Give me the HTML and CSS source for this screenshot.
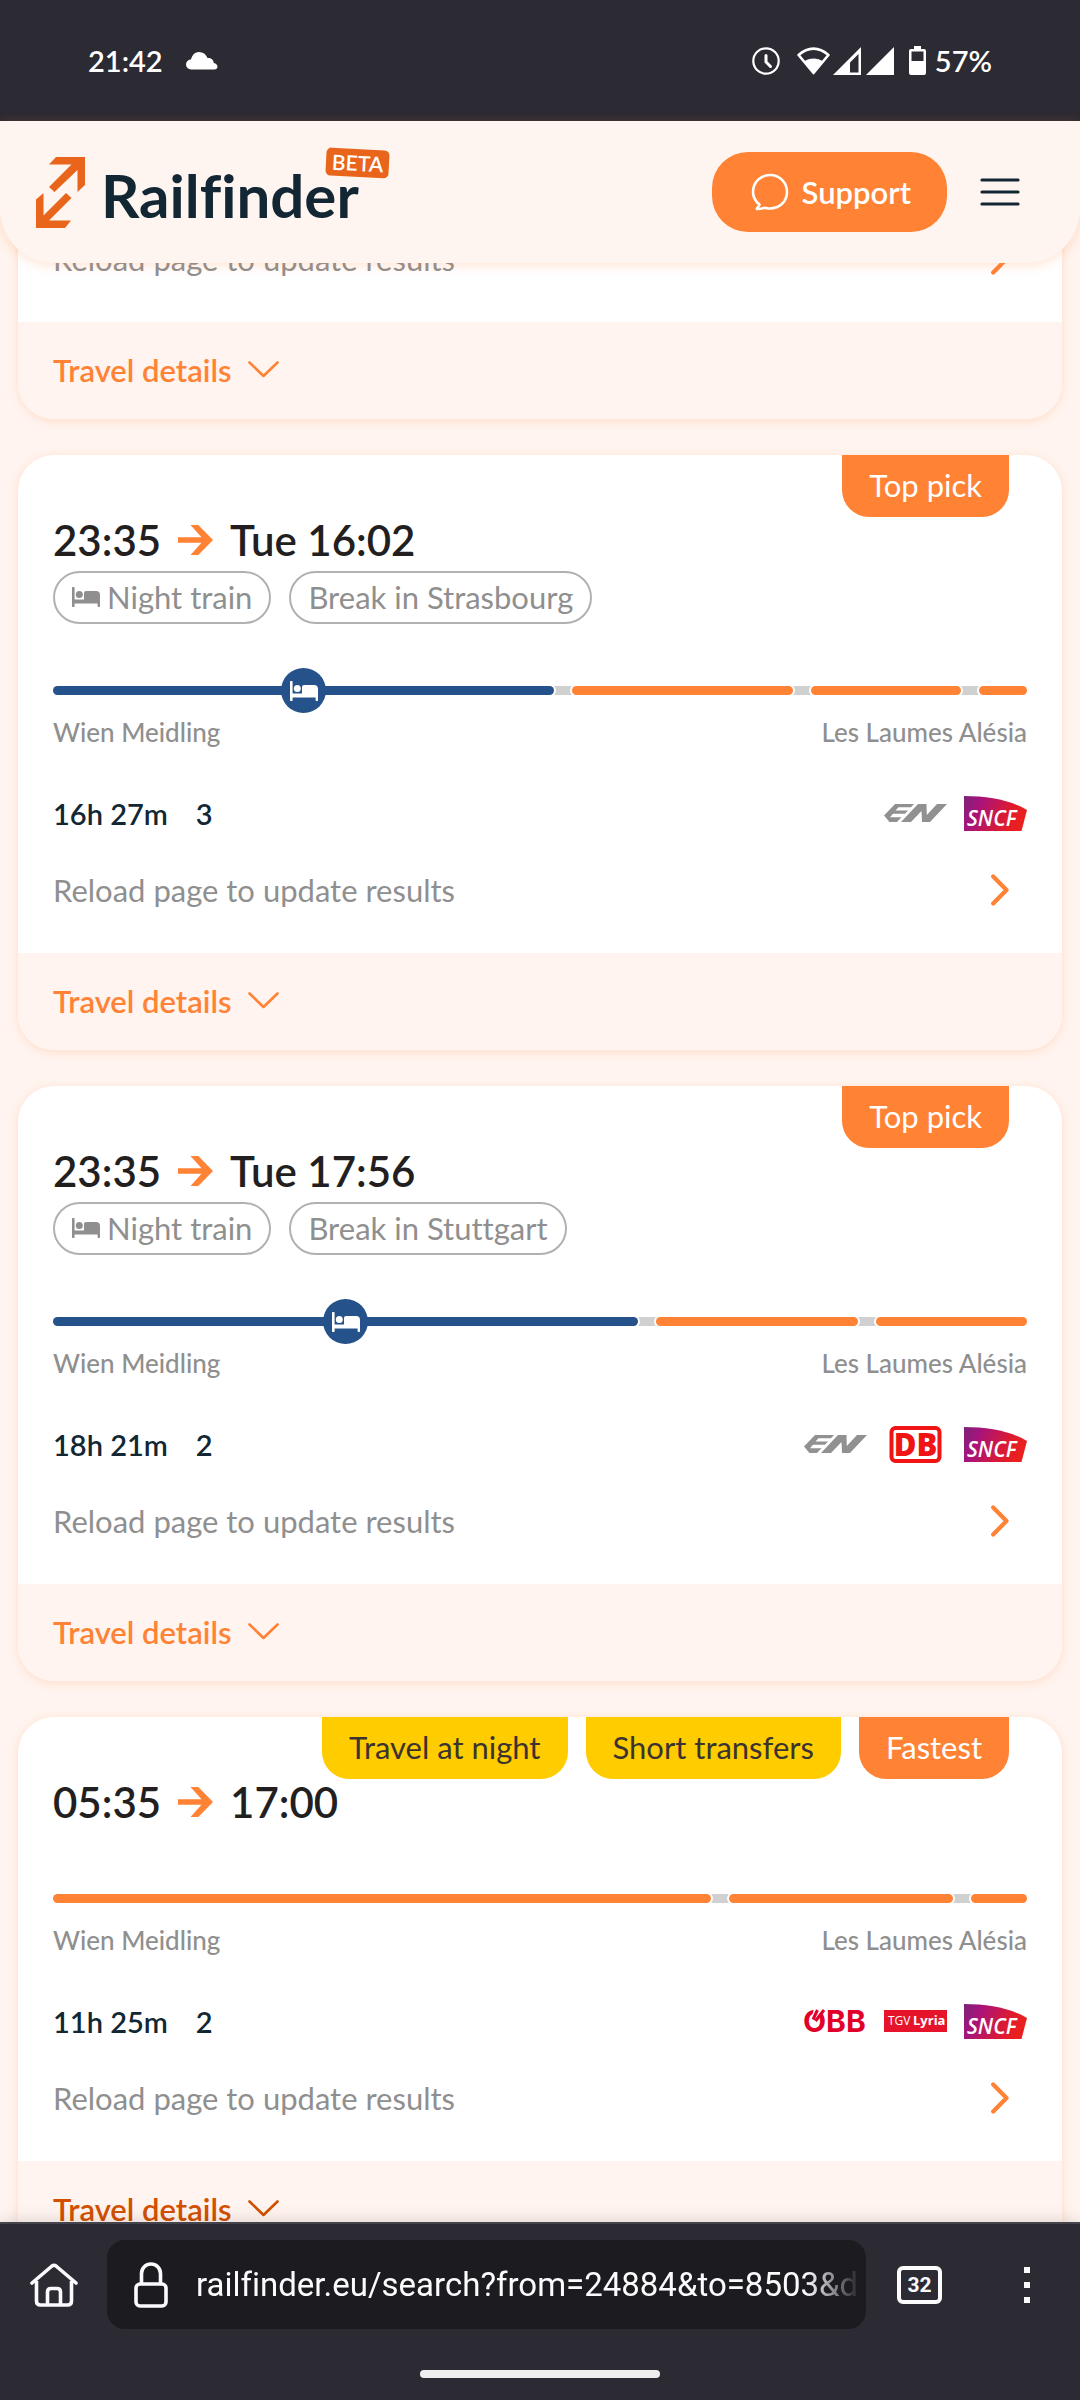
FILE: index.html
```html
<!DOCTYPE html>
<html lang="en">
<head>
<meta charset="utf-8">
<meta name="viewport" content="width=device-width, initial-scale=1">
<title>Railfinder</title>
<link rel="stylesheet" href="styles.css">
</head>
<body>
<svg class="defs" aria-hidden="true">
  <defs>
    <linearGradient id="sncf-fill" x1="0" x2="1" y1="0" y2="0.25">
      <stop offset="0" stop-color="#7a2478"/>
      <stop offset="0.28" stop-color="#a8137c"/>
      <stop offset="0.8" stop-color="#e01b2c"/>
      <stop offset="1" stop-color="#ea1f1f"/>
    </linearGradient>
    <symbol id="bed" viewBox="0 0 28 20">
      <path d="M0 1a1 1 0 0 1 2.600 0v11.500H12V6a2 2 0 0 1 2-2h10a4 4 0 0 1 4 4v11a1 1 0 0 1-2.400 0v-2.500h-23V19a1 1 0 0 1-2.600 0z"/>
      <circle cx="7.300" cy="7.500" r="3.500"/>
    </symbol>
    <symbol id="arrow" viewBox="0 0 35 30">
      <path d="M0 12.200h23.500L12.500 0h7.800L35 15 20.300 30h-7.800l11-12.200H0z"/>
    </symbol>
    <symbol id="down" viewBox="0 0 31 17">
      <path d="M1.500 1.500 15.500 15 29.500 1.500" fill="none" stroke="currentColor" stroke-width="2.600" stroke-linecap="round" stroke-linejoin="round"/>
    </symbol>
    <symbol id="next" viewBox="0 0 18 32">
      <path d="M2.200 2.500 15.500 16 2.200 29.500" fill="none" stroke="currentColor" stroke-width="4.200" stroke-linecap="round" stroke-linejoin="round"/>
    </symbol>
    <symbol id="sncf" viewBox="0 0 63 35">
      <path d="M0 0C25 0 46 4 63 14L57.500 35H0z" fill="url(#sncf-fill)"/>
      <text x="3" y="30" class="sncf-text">SNCF</text>
    </symbol>
    <symbol id="en" viewBox="0 0 63 20">
      <path d="M0 12.500 11 1h19l-3 3.300H14.500L11.500 7.500H24l-3 3.200H9l-3 3.600h11.500L13 19H5.500zM17 19 34 1h8.500l.3 11L53 1h10L46 19h-8l-.5-11L27 19z" fill="#919191"/>
    </symbol>
    <symbol id="db" viewBox="0 0 52 37">
      <rect x="2" y="2" width="48" height="33" rx="4" fill="#fff" stroke="#f01414" stroke-width="4"/>
      <text x="26" y="30" text-anchor="middle" class="db-text">DB</text>
    </symbol>
    <symbol id="obb" viewBox="0 0 63 24">
      <text x="-1" y="23" class="obb-text">OBB</text>
      <path d="M10 0 7 10l5 1 8-11z" fill="#fff"/>
      <path d="M13.500 1 9 10.500M20 1l-8.500 11" stroke="#e2002a" stroke-width="3"/>
    </symbol>
    <symbol id="lyria" viewBox="0 0 63 22">
      <path fill="#e5142b" d="M0 0h63v22H0z"/>
      <text x="4" y="15" class="tgv-text">TGV</text>
      <text x="29" y="15" class="lyria-text">Lyria</text>
    </symbol>
  </defs>
</svg>

<div class="phone">
  <div class="status">
    <span class="status-time">21:42</span>
    <svg class="cloud" width="32" height="18" viewBox="0 0 32 18" fill="#fff"><path d="M5 17.500a5 5 0 0 1 0-10C6 3 9 0 13 0c4 0 7 2 8.500 6 4-.5 6 2 6.300 5 5 1 4.600 6.500.5 6.500z"/></svg>
    <div class="status-icons">
      <svg width="28" height="28" viewBox="0 0 28 28" fill="none" stroke="#fff" stroke-width="2.200" stroke-linecap="round"><circle cx="14" cy="14" r="12.700"/><path d="M14 8.500V15l4.500 4.500" stroke-width="3"/></svg>
      <svg class="wifi" width="33" height="28" viewBox="0 0 33 28"><path d="M1.600 8C11-.5 22-.5 31.400 8L16.500 26z" fill="none" stroke="#fff" stroke-width="2.600" stroke-linejoin="round"/><path d="M7 14.500C12 10.500 21 10.500 26 14.500L16.500 27z" fill="#fff"/></svg>
      <svg width="28" height="28" viewBox="0 0 28 28"><path d="M28 0v28H0z" fill="#fff"/><path d="M25.500 7v18.500h-8.500V15.500z" fill="#2c2a33"/></svg>
      <svg class="signal" width="28" height="28" viewBox="0 0 28 28"><path d="M28 0v28H0z" fill="#fff"/></svg>
      <svg class="battery" width="17" height="29" viewBox="0 0 17 29"><path d="M5 0h7v3h3a2 2 0 0 1 2 2v22a2 2 0 0 1-2 2H2a2 2 0 0 1-2-2V5a2 2 0 0 1 2-2h3z" fill="#fff"/><path d="M2.500 5.500h12V15h-12z" fill="#2c2a33"/></svg>
      <span>57%</span>
    </div>
  </div>

  <header class="site-header">
    <a class="brand" href="#">
      <svg width="49" height="71" viewBox="0 0 49 71" fill="#e9651b"><path d="M20 0h29v28l-7.500 7V13L18.500 35 13 30 35.500 7.500H13zM29 71H0V42.500L7.500 36v22.500L30 36l5.500 5L13 63.500h22z"/></svg>
      <span class="brand-name">Railfinder</span>
      <span class="beta">BETA</span>
    </a>
    <button class="support" type="button">
      <svg width="38" height="38" viewBox="0 0 38 38" fill="none" stroke="#fff" stroke-width="2.600" stroke-linejoin="round" stroke-linecap="round"><path d="M8.500 31.500C4 28 2 24 2 19 2 9.500 9.500 2 19 2s17 7.500 17 17-7.500 16.500-17 16.500c-2 0-3.500-.5-5-.8-2.500.8-5 1.300-8 1.300-.8-.5 2-2.500 2.500-4.500z"/></svg>
      Support
    </button>
    <button class="menu" type="button" aria-label="Menu">
      <svg width="40" height="28" viewBox="0 0 40 28" stroke="#122733" stroke-width="3.200" stroke-linecap="round"><path d="M2 2h36M2 14h36M2 26h36"/></svg>
    </button>
  </header>

  <main class="results">
    <article class="card card-scrolled">
      <div class="card-body">
        <a class="reload" href="#"><span>Reload page to update results</span><svg class="next"><use href="#next"/></svg></a>
      </div>
      <button class="details" type="button">Travel details <svg class="down"><use href="#down"/></svg></button>
    </article>

    <article class="card">
      <div class="tags"><span class="tag">Top pick</span></div>
      <div class="card-body">
        <h2 class="times">23:35 <svg class="arrow"><use href="#arrow"/></svg> Tue 16:02</h2>
        <div class="pills">
          <span class="pill"><svg class="bed"><use href="#bed"/></svg>Night train</span>
          <span class="pill">Break in Strasbourg</span>
        </div>
        <div class="track">
          <span class="leg leg-night" style="flex-grow:501"><span class="bed-dot"><svg class="bed"><use href="#bed"/></svg></span></span>
          <span class="stop"></span>
          <span class="leg" style="flex-grow:221"></span>
          <span class="stop"></span>
          <span class="leg" style="flex-grow:150"></span>
          <span class="stop"></span>
          <span class="leg" style="flex-grow:48"></span>
        </div>
        <div class="stations"><span>Wien Meidling</span><span>Les Laumes Alésia</span></div>
        <div class="facts">
          <span>16h 27m</span><span>3</span>
          <div class="carriers">
            <svg class="logo" role="img" aria-label="EuroNight"><use href="#en" y="9" height="20"/></svg>
            <svg class="logo"><use href="#sncf" y="2" height="35"/></svg>
          </div>
        </div>
        <a class="reload" href="#"><span>Reload page to update results</span><svg class="next"><use href="#next"/></svg></a>
      </div>
      <button class="details" type="button">Travel details <svg class="down"><use href="#down"/></svg></button>
    </article>

    <article class="card">
      <div class="tags"><span class="tag">Top pick</span></div>
      <div class="card-body">
        <h2 class="times">23:35 <svg class="arrow"><use href="#arrow"/></svg> Tue 17:56</h2>
        <div class="pills">
          <span class="pill"><svg class="bed"><use href="#bed"/></svg>Night train</span>
          <span class="pill">Break in Stuttgart</span>
        </div>
        <div class="track">
          <span class="leg leg-night" style="flex-grow:585"><span class="bed-dot"><svg class="bed"><use href="#bed"/></svg></span></span>
          <span class="stop"></span>
          <span class="leg" style="flex-grow:202"></span>
          <span class="stop"></span>
          <span class="leg" style="flex-grow:151"></span>
        </div>
        <div class="stations"><span>Wien Meidling</span><span>Les Laumes Alésia</span></div>
        <div class="facts">
          <span>18h 21m</span><span>2</span>
          <div class="carriers">
            <svg class="logo" role="img" aria-label="EuroNight"><use href="#en" y="9" height="20"/></svg>
            <svg class="logo"><use href="#db" y="1" height="37"/></svg>
            <svg class="logo"><use href="#sncf" y="2" height="35"/></svg>
          </div>
        </div>
        <a class="reload" href="#"><span>Reload page to update results</span><svg class="next"><use href="#next"/></svg></a>
      </div>
      <button class="details" type="button">Travel details <svg class="down"><use href="#down"/></svg></button>
    </article>

    <article class="card">
      <div class="tags">
        <span class="tag tag-yellow">Travel at night</span>
        <span class="tag tag-yellow">Short transfers</span>
        <span class="tag">Fastest</span>
      </div>
      <div class="card-body">
        <h2 class="times">05:35 <svg class="arrow"><use href="#arrow"/></svg> 17:00</h2>
        <div class="track">
          <span class="leg" style="flex-grow:658"></span>
          <span class="stop"></span>
          <span class="leg" style="flex-grow:224"></span>
          <span class="stop"></span>
          <span class="leg" style="flex-grow:56"></span>
        </div>
        <div class="stations"><span>Wien Meidling</span><span>Les Laumes Alésia</span></div>
        <div class="facts">
          <span>11h 25m</span><span>2</span>
          <div class="carriers">
            <svg class="logo"><use href="#obb" y="7" height="24"/></svg>
            <svg class="logo"><use href="#lyria" y="8" height="22"/></svg>
            <svg class="logo"><use href="#sncf" y="2" height="35"/></svg>
          </div>
        </div>
        <a class="reload" href="#"><span>Reload page to update results</span><svg class="next"><use href="#next"/></svg></a>
      </div>
      <button class="details details-active" type="button">Travel details <svg class="down"><use href="#down"/></svg></button>
    </article>
  </main>

  <footer class="browser">
    <div class="browser-row">
      <button class="browser-button" type="button" aria-label="Home">
        <svg width="48" height="44" viewBox="0 0 48 44" fill="none" stroke="#fbfbfe" stroke-width="3.600" stroke-linecap="round" stroke-linejoin="round"><path d="M2 20 22 3q2-1.500 4 0l20 17M6.500 18v20q0 4 4 4h27q4 0 4-4V18M17.500 42V29q0-3.500 3.500-3.500h6q3.500 0 3.500 3.500v13"/></svg>
      </button>
      <label class="url">
        <svg width="34" height="46" viewBox="0 0 34 46" fill="none" stroke="#fbfbfe" stroke-width="3.600"><rect x="2" y="22" width="30" height="22" rx="4"/><path d="M7.500 22V11.500a9.500 9.500 0 0 1 19 0V22"/></svg>
        <input type="text" aria-label="Address" value="railfinder.eu/search?from=24884&amp;to=8503&amp;d">
      </label>
      <button class="tabs" type="button" aria-label="Tabs">32</button>
      <button class="browser-button" type="button" aria-label="More">
        <svg width="8" height="38" viewBox="0 0 8 38" fill="#fbfbfe"><path d="M1 1h6v6H1zM1 16h6v6H1zM1 31h6v6H1z"/></svg>
      </button>
    </div>
    <div class="home-bar"></div>
  </footer>
</div>
</body>
</html>
```
FILE: styles.css
```css
* { box-sizing: border-box; }

body {
  margin: 0;
  font-family: Lato, "Liberation Sans", sans-serif;
  font-size: 31px;
  line-height: 40px;
  font-variant-ligatures: none;
  color: #122733;
  background: #fff4ef;
}

button, input { font: inherit; border: 0; padding: 0; margin: 0; background: none; }
a { color: inherit; text-decoration: none; }
svg { display: block; flex: none; }
.defs { position: absolute; width: 0; height: 0; }

.phone { height: 100vh; display: flex; flex-direction: column; overflow: hidden; }

/* System status bar */
.status {
  flex: none;
  height: 121px;
  padding: 0 88px;
  display: flex;
  align-items: center;
  background: #2c2a33;
  color: #fff;
  font-size: 29px;
  font-weight: 600;
}
.cloud { margin-left: 23px; }
.status-icons { margin-left: auto; display: flex; align-items: center; }
.wifi { margin: 0 3px 0 17px; }
.signal { margin-left: 5px; }
.battery { margin: 0 9px 0 15px; }

/* Site header */
.site-header {
  flex: none;
  position: relative;
  z-index: 2;
  height: 142px;
  padding: 0 60px 0 36px;
  display: flex;
  align-items: center;
  background: #fff5f0;
  border-radius: 0 0 54px 54px;
  box-shadow: 0 2px 12px rgba(255, 130, 53, 0.24);
}
.brand { position: relative; display: flex; align-items: center; gap: 16px; margin-right: auto; }
.brand-name { padding-top: 5px; font-size: 60px; line-height: 72px; font-weight: 700; }
.beta {
  position: absolute;
  top: -5px;
  left: 290px;
  padding: 0 6px;
  border-radius: 5px;
  background: #e9651b;
  color: #fff;
  font-size: 21px;
  line-height: 28px;
  font-weight: 600;
  transform: rotate(3deg);
}
.support {
  height: 80px;
  padding: 0 36px 0 39px;
  display: flex;
  align-items: center;
  gap: 13px;
  border-radius: 36px;
  background: #ff8235;
  color: #fff;
  font-weight: 600;
}
.menu { margin-left: 33px; }

/* Result cards */
.results {
  flex: 1;
  min-height: 0;
  margin-top: -54px;
  padding: 0 18px;
  display: flex;
  flex-direction: column;
  gap: 36px;
  overflow: hidden;
}
.card {
  flex: none;
  position: relative;
  border-radius: 36px;
  background: #fff;
  box-shadow: 0 2px 10px rgba(255, 130, 53, 0.2);
}
.card-body { padding: 58px 35px 43px; }
.card-scrolled { border-radius: 0 0 36px 36px; }
.card-scrolled .card-body { padding-top: 30px; }
.card-scrolled .reload { margin-top: 0; }

.tags { position: absolute; top: 0; right: 53px; display: flex; gap: 18px; }
.tag {
  padding: 10px 27px 12px;
  border-radius: 0 0 27px 27px;
  background: #ff8235;
  color: #fff;
}
.tag-yellow { background: #ffcc00; color: #3b3331; }

.times {
  margin: 0 0 4px;
  display: flex;
  align-items: center;
  gap: 17px;
  font-size: 42px;
  line-height: 54px;
  font-weight: 600;
  color: #231f20;
}
.arrow { width: 35px; height: 30px; fill: #ff8235; }

.pills { display: flex; gap: 18px; height: 54px; color: #8f8f8f; }
.pill {
  display: flex;
  align-items: center;
  gap: 7px;
  height: 53px;
  padding: 0 17px 2px;
  border: 2px solid #b1b1b1;
  border-radius: 27px;
}
.bed { width: 28px; height: 20px; fill: currentColor; }

.track { display: flex; height: 9px; margin-top: 61px; }
.times + .track { margin-top: 65px; }
.leg {
  flex: 1 1 0;
  position: relative;
  z-index: 1;
  border-radius: 5px;
  background: #ff8235;
  box-shadow: 0 0 0 2px #fff;
}
.leg-night { background: #25528a; display: grid; place-items: center; }
.bed-dot {
  position: absolute;
  width: 45px;
  height: 45px;
  display: grid;
  place-items: center;
  border-radius: 50%;
  background: #25528a;
  color: #fff;
}
.stop { flex: 0 0 26px; margin: 0 -4px; background: #d0d0d0; }

.stations {
  display: flex;
  justify-content: space-between;
  margin-top: 19px;
  font-size: 26px;
  line-height: 36px;
  font-weight: 500;
  color: #8f8f8f;
}
.facts {
  display: flex;
  align-items: center;
  gap: 28px;
  margin-top: 44px;
  font-size: 29px;
  font-weight: 600;
}
.carriers { display: flex; gap: 17px; margin-left: auto; }
.logo { width: 63px; height: 40px; }
.reload {
  display: flex;
  align-items: center;
  justify-content: space-between;
  margin-top: 36px;
  padding-right: 18px;
  color: #8f8f8f;
}
.next { width: 18px; height: 32px; color: #ff8235; }
.details {
  width: 100%;
  height: 97px;
  padding: 0 35px 2px;
  display: flex;
  align-items: center;
  gap: 16px;
  border-radius: 0 0 36px 36px;
  background: #fff4ef;
  color: #ff8235;
  font-weight: 600;
}
.details-active { color: #d35000; }
.down { width: 31px; height: 17px; }

/* Lettering inside the carrier logos */
.sncf-text { font: italic 600 21px "Open Sans", sans-serif; fill: #fff; }
.db-text { font: 800 31px "Open Sans", sans-serif; fill: #f01414; }
.obb-text { font: 700 30px Inter, sans-serif; fill: #e2002a; }
.tgv-text { font: 500 12px "Open Sans", sans-serif; fill: #fff; }
.lyria-text { font: 700 13px "Open Sans", sans-serif; fill: #fff; }

/* Browser toolbar */
.browser {
  flex: none;
  position: relative;
  z-index: 2;
  height: 178px;
  padding-top: 16px;
  border-top: 2px solid #45444c;
  background: #2c2a33;
  box-shadow: 0 -2px 16px rgba(0, 0, 0, 0.12);
}
.browser-row { display: flex; align-items: center; }
.browser-button { flex: none; width: 107px; display: grid; place-items: center; }
.url {
  flex: 1;
  min-width: 0;
  height: 89px;
  padding: 0 5px 0 27px;
  display: flex;
  align-items: center;
  gap: 28px;
  border-radius: 18px;
  background: #1c1b20;
}
.url input {
  flex: 1;
  min-width: 0;
  color: #fbfbfe;
  font-family: Roboto, sans-serif;
  font-size: 33px;
  mask-image: linear-gradient(to left, transparent, #000 54px);
}
.tabs {
  flex: none;
  width: 45px;
  height: 38px;
  margin: 0 31px;
  border: 4px solid #fbfbfe;
  border-radius: 6px;
  color: #fbfbfe;
  font: 700 21px/28px Roboto, sans-serif;
}
.home-bar {
  width: 240px;
  height: 8px;
  margin: 41px auto 0;
  border-radius: 4px;
  background: #eee;
}
```
